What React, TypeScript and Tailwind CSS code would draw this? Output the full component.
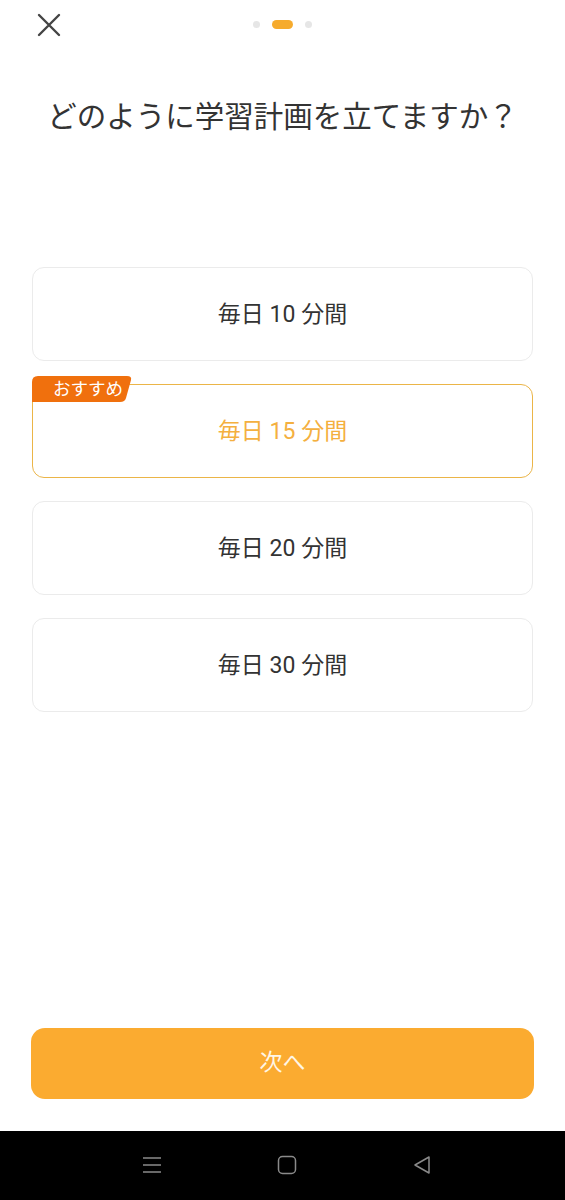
import { useState } from "react"

const PLANS = [10, 15, 20, 30]

function Badge() {
  return (
    <div className="absolute left-[-1px] top-[-9px] h-[26px] w-[100px]">
      <svg className="absolute inset-0" width="100" height="26" viewBox="0 0 100 26">
        <path d="M0 6 Q0 0 6 0 H95 Q100 0 99 4 L94 22 Q93 26 88 26 H0 Z" fill="#f0700d" />
      </svg>
      <span className="relative block pl-[12px] text-[17.5px] font-normal leading-[26px] text-white">おすすめ</span>
    </div>
  )
}

export default function App() {
  const [picked, setPicked] = useState(15)

  return (
    <div
      className="flex h-[1200px] w-[565px] flex-col bg-white"
      style={{ fontFamily: 'Roboto, "Noto Sans CJK JP", sans-serif' }}
    >
      {/* top bar */}
      <div className="relative h-[50px]">
        <svg className="absolute left-[37px] top-[13px]" width="24" height="24" viewBox="0 0 24 24">
          <path d="M2 2 L22 22 M22 2 L2 22" stroke="#444" strokeWidth="2.4" strokeLinecap="round" />
        </svg>
        <div className="absolute left-0 right-0 top-[20px] flex items-center justify-center gap-[12px]">
          <span className="h-[7px] w-[7px] rounded-full bg-[#e6e6e6]" />
          <span className="h-[9px] w-[21px] rounded-full bg-[#f6ab2d]" />
          <span className="h-[7px] w-[7px] rounded-full bg-[#e6e6e6]" />
        </div>
      </div>

      <h1 className="mt-[47px] text-center text-[29.5px] font-normal leading-[40px] text-[#333]">
        どのように学習計画を立てますか？
      </h1>

      <div className="mt-[130px] flex flex-col gap-[23px] px-[32px]">
        {PLANS.map((m) => {
          const on = m === picked
          return (
            <button
              key={m}
              type="button"
              onClick={() => setPicked(m)}
              className={`relative flex h-[94px] w-full items-center justify-center rounded-[12px] border pt-[2px] text-[23px] ${
                on ? "border-[#ebb548] text-[#f4b03f]" : "border-[#ebebeb] text-[#333]"
              }`}
            >
              {m === 15 && <Badge />}
              毎日 {m} 分間
            </button>
          )
        })}
      </div>

      <div className="flex-1" />

      <div className="px-[31px] pb-[32px]">
        <button
          type="button"
          className="flex h-[71px] w-full items-center justify-center rounded-[14px] bg-[#fbab30] text-[23px] text-[#fff6e6]"
        >
          次へ
        </button>
      </div>

      {/* system nav */}
      <div className="flex h-[69px] items-center justify-center gap-[115px] bg-black pb-[1px] pl-[8px]">
        <svg width="20" height="20" viewBox="0 0 20 20">
          <path d="M1 3 H19 M1 10 H19 M1 17 H19" stroke="#8a8a8a" strokeWidth="1.5" />
        </svg>
        <svg width="20" height="20" viewBox="0 0 20 20">
          <rect x="1.5" y="1.5" width="17" height="17" rx="4" fill="none" stroke="#8a8a8a" strokeWidth="1.5" />
        </svg>
        <svg width="20" height="20" viewBox="0 0 20 20">
          <path d="M17 2 L3 10 L17 18 Z" fill="none" stroke="#8a8a8a" strokeWidth="1.5" strokeLinejoin="round" />
        </svg>
      </div>
    </div>
  )
}
